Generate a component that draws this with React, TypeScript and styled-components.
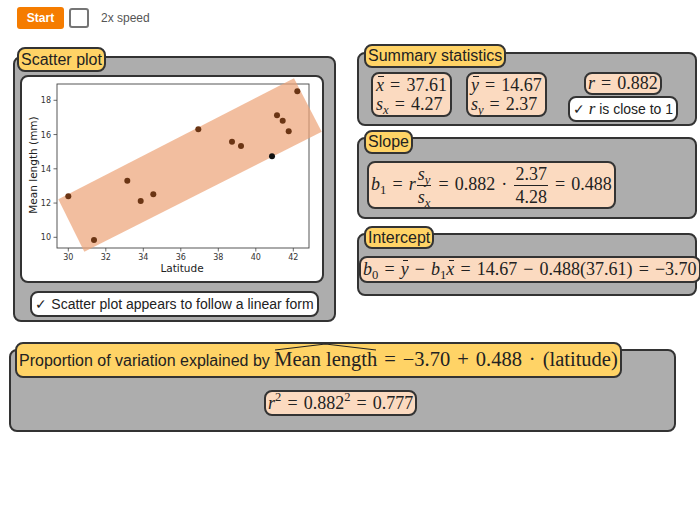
import React from 'react'
import styled, { createGlobalStyle } from 'styled-components'

const GlobalStyle = createGlobalStyle`
  body {
    margin: 0;
    font-family: 'Liberation Sans', Arial, sans-serif;
    color: #222;
    background: #fff;
  }
`

const TopBar = styled.div`
  display: flex;
  align-items: center;
  height: 22px;
  padding: 7px 0 0 17px;
`

const StartButton = styled.button`
  width: 47px;
  height: 22px;
  padding: 0;
  border: none;
  border-radius: 3px;
  background: #f57c00;
  color: #fff;
  font: bold 12px 'Liberation Sans', Arial, sans-serif;
`

const SpeedBox = styled.span`
  width: 20px;
  height: 20px;
  box-sizing: border-box;
  margin-left: 5px;
  border: 2px solid #757575;
  border-radius: 3px;
  background: #fff;
`

const SpeedLabel = styled.span`
  margin-left: 12px;
  font-size: 12px;
  color: #555;
`

const Workspace = styled.div`
  display: flex;
  align-items: flex-start;
  margin-top: 23px;
  padding-left: 13px;
`

const Column = styled.div`
  display: flex;
  flex-direction: column;
  width: 340px;
  margin-left: 21px;
`

const Panel = styled.div<{ $w?: number; $h: number; $mt?: number; $ml?: number }>`
  display: flex;
  flex-direction: column;
  box-sizing: border-box;
  width: ${p => (p.$w ? `${p.$w}px` : '100%')};
  height: ${p => p.$h}px;
  margin-top: ${p => p.$mt || 0}px;
  margin-left: ${p => p.$ml || 0}px;
  background: #adadad;
  border: 2px solid #333;
  border-radius: 8px;
`

const Tag = styled.div<{ $lh: number; $top: number; $left: number }>`
  align-self: flex-start;
  margin: ${p => p.$top}px 0 0 ${p => p.$left}px;
  padding: 0 2px;
  background: #ffd366;
  border: 2px solid #333;
  border-radius: 8px;
  font-size: 16px;
  line-height: ${p => p.$lh}px;
  white-space: nowrap;
`

const ChartCard = styled.div`
  box-sizing: border-box;
  width: 304px;
  height: 208px;
  margin: 3px 0 0 5px;
  background: #fff;
  border: 2px solid #333;
  border-radius: 8px;
  overflow: hidden;
`

const Note = styled.div<{ $mt?: number }>`
  align-self: center;
  margin-top: ${p => p.$mt || 0}px;
  padding: 0 3px;
  background: #fff;
  border: 2px solid #333;
  border-radius: 8px;
  font-size: 14px;
  line-height: 22px;
  white-space: nowrap;
`

const NoteVar = styled.i`
  font-family: 'Liberation Serif', 'Times New Roman', serif;
  font-size: 17px;
`

const MathBox = styled.div`
  padding: 0 2px;
  background: #fbdac0;
  border: 2px solid #333;
  border-radius: 8px;
  font-family: 'Liberation Serif', 'Times New Roman', serif;
  font-size: 18px;
  line-height: 19px;
  white-space: nowrap;
`

const StatsRow = styled.div`
  display: flex;
  align-items: flex-start;
  margin: 4px 0 0 12px;
`

const StatBox = styled(MathBox)`
  display: flex;
  flex-direction: column;
  align-items: flex-start;
  justify-content: center;
  box-sizing: border-box;
  height: 45px;
  padding: 0 3px;
  & + & {
    margin-left: 14px;
  }
`

const RGroup = styled.div`
  display: flex;
  flex-direction: column;
  align-items: center;
  gap: 1px;
  margin-left: 21px;
`

const FormulaBox = styled(MathBox)<{ $mt: number; $ml: number; $lh: number }>`
  align-self: flex-start;
  margin: ${p => p.$mt}px 0 0 ${p => p.$ml}px;
  line-height: ${p => p.$lh}px;
`

const V = styled.i`
  font-style: italic;
`

const Up = styled.span`
  font-style: normal;
`

const Op = styled.span`
  margin: 0 0.34em;
`

const Sub = styled.span`
  font-size: 0.7em;
  line-height: 0;
  vertical-align: -0.3em;
`

const Sup = styled.span`
  font-size: 0.7em;
  line-height: 0;
  vertical-align: 0.6em;
`

const Bar = styled.span`
  position: relative;
  &::before {
    content: '';
    position: absolute;
    left: 0.12em;
    right: 0.02em;
    top: 0.08em;
    border-top: 1px solid #222;
  }
`

const Frac = styled.span`
  display: inline-flex;
  flex-direction: column;
  align-items: center;
  margin: 0 1px;
  line-height: 20px;
  vertical-align: middle;
`

const FracTop = styled.span`
  padding: 0 1px 1px;
  border-bottom: 1px solid #222;
`

const FracBottom = styled.span`
  padding: 1px 1px 0;
`

const HatWrap = styled.span`
  position: relative;
`

const HatMark = styled.svg`
  position: absolute;
  left: 0;
  top: -5px;
  width: 100%;
  height: 8px;
`

const BottomLabelText = styled.span`
  font-family: 'Liberation Sans', Arial, sans-serif;
  font-size: 16px;
`

const BottomMath = styled.span`
  font-family: 'Liberation Serif', 'Times New Roman', serif;
  font-size: 20.5px;
`

const points: [number, number, boolean?][] = [
  [46.3, 119.3],
  [72, 163],
  [105.3, 103.7],
  [118.7, 124],
  [131.3, 117.3],
  [176.3, 52.3],
  [210, 64.7],
  [219, 69],
  [250, 79.3, true],
  [255, 38.3],
  [260.7, 43.7],
  [266.7, 54.3],
  [275.3, 14.3],
]

const xTicks = [30, 32, 34, 36, 38, 40, 42]
const yTicks = [10, 12, 14, 16, 18]

function ScatterChart() {
  const tx = (t: number) => 46.3 + (t - 30) * 18.75
  const ty = (v: number) => 160.3 - (v - 10) * 17.125
  return (
    <svg width="300" height="204" viewBox="0 0 300 204" style={{ display: 'block' }}>
      <rect x="35" y="7" width="252" height="164" fill="none" stroke="#444" strokeWidth="0.9" />
      {xTicks.map(t => (
        <g key={t}>
          <line x1={tx(t)} x2={tx(t)} y1="171" y2="174.5" stroke="#444" strokeWidth="0.8" />
          <text x={tx(t)} y="183" fontSize="8" textAnchor="middle" fill="#333" fontFamily="DejaVu Sans, sans-serif">
            {t}
          </text>
        </g>
      ))}
      {yTicks.map(v => (
        <g key={v}>
          <line x1="31.5" x2="35" y1={ty(v)} y2={ty(v)} stroke="#444" strokeWidth="0.8" />
          <text x="29" y={ty(v) + 3} fontSize="8" textAnchor="end" fill="#333" fontFamily="DejaVu Sans, sans-serif">
            {v}
          </text>
        </g>
      ))}
      <polygon points="36.3,122.3 62.3,174.7 299.7,54.7 272,1.3" fill="#eda276" fillOpacity="0.7" />
      {points.map(([x, y, dark], i) => (
        <circle key={i} cx={x} cy={y} r="3" fill={dark ? '#111' : '#6b3514'} />
      ))}
      <text x="160" y="195" fontSize="10.5" textAnchor="middle" fill="#222" fontFamily="DejaVu Sans, sans-serif">
        Latitude
      </text>
      <text
        x="0"
        y="0"
        fontSize="10.5"
        textAnchor="middle"
        fill="#222"
        fontFamily="DejaVu Sans, sans-serif"
        transform="translate(15 88) rotate(-90)"
      >
        Mean length (mm)
      </text>
    </svg>
  )
}

export default function App() {
  return (
    <>
      <GlobalStyle />
      <TopBar>
        <StartButton>Start</StartButton>
        <SpeedBox />
        <SpeedLabel>2x speed</SpeedLabel>
      </TopBar>

      <Workspace>
        <Panel $w={323} $h={266} $mt={4}>
          <Tag $lh={21} $top={-11} $left={2}>Scatter plot</Tag>
          <ChartCard>
            <ScatterChart />
          </ChartCard>
          <Note $mt={8}>✓ Scatter plot appears to follow a linear form</Note>
        </Panel>

        <Column>
          <Panel $h={74}>
            <Tag $lh={20} $top={-10} $left={5}>Summary statistics</Tag>
            <StatsRow>
              <StatBox>
                <span>
                  <Bar><V>x</V></Bar><Op>=</Op>37.61
                </span>
                <span>
                  <V>s</V><Sub><V>x</V></Sub><Op>=</Op>4.27
                </span>
              </StatBox>
              <StatBox>
                <span>
                  <Bar><V>y</V></Bar><Op>=</Op>14.67
                </span>
                <span>
                  <V>s</V><Sub><V>y</V></Sub><Op>=</Op>2.37
                </span>
              </StatBox>
              <RGroup>
                <MathBox>
                  <V>r</V><Op>=</Op>0.882
                </MathBox>
                <Note>
                  ✓ <NoteVar>r</NoteVar> is close to 1
                </Note>
              </RGroup>
            </StatsRow>
          </Panel>

          <Panel $h={82} $mt={11}>
            <Tag $lh={20} $top={-9} $left={5}>Slope</Tag>
            <FormulaBox $mt={7} $ml={8} $lh={43}>
              <V>b</V><Sub>1</Sub><Op>=</Op><V>r</V>
              <Frac>
                <FracTop><V>s</V><Sub><V>y</V></Sub></FracTop>
                <FracBottom><V>s</V><Sub><V>x</V></Sub></FracBottom>
              </Frac>
              <Op>=</Op>0.882<Op>·</Op>
              <Frac>
                <FracTop>2.37</FracTop>
                <FracBottom>4.28</FracBottom>
              </Frac>
              <Op>=</Op>0.488
            </FormulaBox>
          </Panel>

          <Panel $h={63} $mt={14}>
            <Tag $lh={19} $top={-9} $left={5}>Intercept</Tag>
            <FormulaBox $mt={7} $ml={0} $lh={23}>
              <V>b</V><Sub>0</Sub><Op>=</Op><Bar><V>y</V></Bar><Op>−</Op><V>b</V><Sub>1</Sub>
              <Bar><V>x</V></Bar><Op>=</Op>14.67<Op>−</Op>0.488(37.61)<Op>=</Op>−3.70
            </FormulaBox>
          </Panel>
        </Column>
      </Workspace>

      <Panel $w={667} $h={83} $mt={27} $ml={9}>
        <Tag $lh={30} $top={-9} $left={4}>
          <BottomLabelText>Proportion of variation explained by </BottomLabelText>
          <BottomMath>
            <HatWrap>
              <Up>Mean length</Up>
              <HatMark viewBox="0 0 100 8" preserveAspectRatio="none">
                <path d="M1 7 L50 1 L99 7" fill="none" stroke="#222" strokeWidth="1.2" vectorEffect="non-scaling-stroke" />
              </HatMark>
            </HatWrap>
            <Op>=</Op>−3.70<Op>+</Op>0.488<Op>·</Op>(latitude)
          </BottomMath>
        </Tag>
        <FormulaBox $mt={12} $ml={253} $lh={22}>
          <V>r</V><Sup>2</Sup><Op>=</Op>0.882<Sup>2</Sup><Op>=</Op>0.777
        </FormulaBox>
      </Panel>
    </>
  )
}
